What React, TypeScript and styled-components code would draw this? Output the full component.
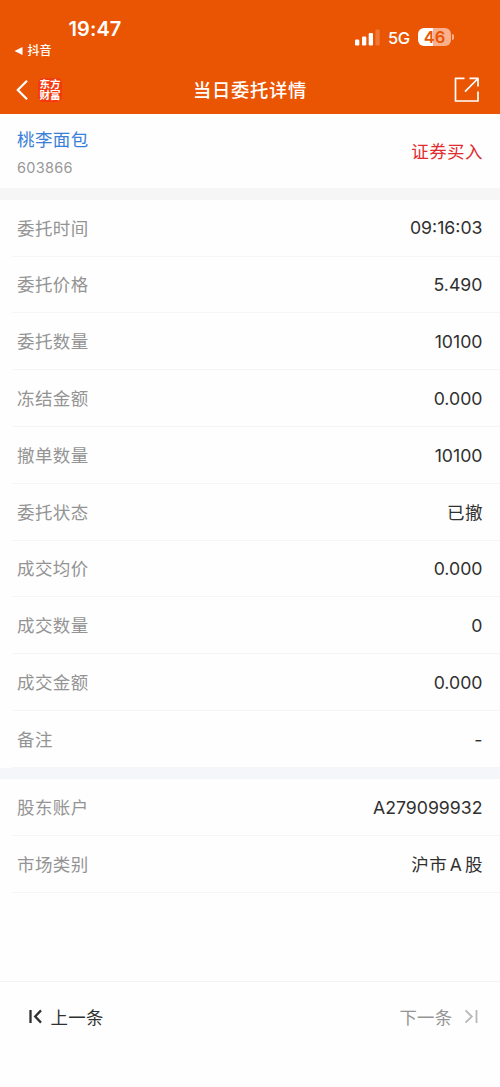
import React from "react";
import styled, { createGlobalStyle } from "styled-components";

const GlobalStyle = createGlobalStyle`
  *, *::before, *::after { box-sizing: border-box; }
  body {
    margin: 0;
    background: #fefefe;
    font-family: Inter, "Noto Sans CJK SC", sans-serif;
    color: #303030;
  }
`;

const Screen = styled.main`
  display: flex;
  flex-direction: column;
  width: 500px;
  height: 1087px;
  overflow: hidden;
`;

const Header = styled.header`
  display: flex;
  flex-direction: column;
  height: 114px;
  background: #ea5504;
  color: #fff;
`;

const StatusBar = styled.div`
  display: flex;
  justify-content: space-between;
  height: 64px;
  padding: 15px 46px 0 14px;
`;

const ClockArea = styled.div`
  display: flex;
  flex-direction: column;
`;

const Clock = styled.time`
  padding-left: 54.5px;
  font-size: 20px;
  font-weight: 600;
  line-height: 28px;
  letter-spacing: 0.1px;
`;

const ReturnLink = styled.div`
  display: flex;
  align-items: center;
  gap: 4.5px;
  height: 15px;
  font-size: 12px;
  font-weight: 500;
  line-height: 15px;
`;

const Signals = styled.div`
  display: flex;
  align-items: center;
  height: 44px;
`;

const Network = styled.span`
  width: 23px;
  margin: 1px 7px 0 8px;
  font-size: 16.5px;
  font-weight: 500;
  letter-spacing: -0.5px;
`;

const Battery = styled.div`
  display: flex;
  align-items: center;
  gap: 1px;
`;

const BatteryBody = styled.div`
  width: 33px;
  height: 18px;
  border-radius: 6px;
  background: linear-gradient(to right, #fff 46%, #f8b18c 46%);
  color: #ea5504;
  font-size: 16.5px;
  font-weight: 600;
  line-height: 18.5px;
  text-align: center;
`;

const BatteryTip = styled.div`
  width: 2px;
  height: 6px;
  border-radius: 0 2px 2px 0;
  background: #f8b18c;
`;

const TitleBar = styled.div`
  display: grid;
  grid-template-columns: 1fr auto 1fr;
  align-items: center;
  height: 50px;
  padding: 1px 20px 0 16px;
`;

const Title = styled.h1`
  margin: 0;
  padding: 1px 0 0 4px;
  font-size: 18.3px;
  font-weight: 500;
  line-height: 28px;
  letter-spacing: 0.7px;
`;

const BackArea = styled.div`
  display: flex;
  align-items: center;
  gap: 10px;
`;

const Brand = styled.div`
  display: flex;
  flex-direction: column;
  align-items: center;
  width: 24px;
  height: 24px;
  border-radius: 5px;
  background: #f5390d;
  font-family: "Noto Sans CJK SC", sans-serif;
  font-size: 10.6px;
  font-weight: 700;
  line-height: 11.5px;
  white-space: nowrap;
`;

const ShareIcon = styled.svg`
  justify-self: end;
`;

const Stock = styled.section`
  display: flex;
  align-items: center;
  justify-content: space-between;
  height: 74.2px;
  padding: 0 17.5px 0 17px;
`;

const StockId = styled.div`
  display: flex;
  flex-direction: column;
  padding-top: 5.4px;
`;

const StockName = styled.span`
  color: #3a80d8;
  font-size: 17.5px;
  line-height: 28px;
  letter-spacing: 0.4px;
`;

const StockCode = styled.span`
  color: #999;
  font-size: 14.5px;
  line-height: 28px;
  letter-spacing: 0.3px;
`;

const Side = styled.span`
  margin: -2px -0.4px 0 0;
  color: #e22b2f;
  font-size: 17.5px;
  letter-spacing: 0.4px;
`;

const Divider = styled.div<{ $color: string }>`
  height: 11.6px;
  background: ${(p) => p.$color};
`;

const Row = styled.div`
  display: flex;
  align-items: center;
  justify-content: space-between;
  height: 56.8px;
  margin-left: 12px;
  padding: 1px 17.5px 0 5px;
  border-bottom: 1px solid #f5f5f5;
`;

const List = styled.section`
  display: flex;
  flex-direction: column;
`;

const Label = styled.span`
  margin-top: -2px;
  color: #949494;
  font-size: 17.5px;
  letter-spacing: 0.4px;
`;

const Value = styled.span<{ $cjk?: boolean }>`
  margin: ${(p) => (p.$cjk ? "-2px -0.4px 0 0" : "-0.5px 0 0")};
  font-size: ${(p) => (p.$cjk ? "17.5px" : "17.7px")};
  letter-spacing: ${(p) => (p.$cjk ? "0.4px" : "0")};
  word-spacing: -2.6px;
`;

const Footer = styled.footer`
  display: flex;
  justify-content: space-between;
  height: 106px;
  margin-top: auto;
  padding: 19px 21px 0 28px;
  border-top: 1px solid #f3f3f3;
`;

const PageButton = styled.button<{ $muted?: boolean }>`
  display: flex;
  align-items: center;
  gap: ${(p) => (p.$muted ? "11.5px" : "7.5px")};
  height: 30px;
  padding: 0;
  border: 0;
  background: none;
  color: ${(p) => (p.$muted ? "#949494" : "#303030")};
  font-family: inherit;
  font-size: 17.4px;
  letter-spacing: 0.3px;
`;

type Entry = { label: string; value: string; cjk?: boolean };

const orderRows: Entry[] = [
  { label: "委托时间", value: "09:16:03" },
  { label: "委托价格", value: "5.490" },
  { label: "委托数量", value: "10100" },
  { label: "冻结金额", value: "0.000" },
  { label: "撤单数量", value: "10100" },
  { label: "委托状态", value: "已撤", cjk: true },
  { label: "成交均价", value: "0.000" },
  { label: "成交数量", value: "0" },
  { label: "成交金额", value: "0.000" },
  { label: "备注", value: "-" },
];

const accountRows: Entry[] = [
  { label: "股东账户", value: "A279099932" },
  { label: "市场类别", value: "沪市 A 股", cjk: true },
];

const Entries = ({ items }: { items: Entry[] }) => (
  <List>
    {items.map((item) => (
      <Row key={item.label}>
        <Label>{item.label}</Label>
        <Value $cjk={item.cjk}>{item.value}</Value>
      </Row>
    ))}
  </List>
);

export default function App() {
  return (
    <Screen>
      <GlobalStyle />
      <Header>
        <StatusBar>
          <ClockArea>
            <Clock>19:47</Clock>
            <ReturnLink>
              <svg width="9" height="8" viewBox="0 0 9 8">
                <path d="M0.5 4 8.5 0.1V7.9Z" fill="#fff" />
              </svg>
              抖音
            </ReturnLink>
          </ClockArea>
          <Signals>
            <svg width="25" height="17" viewBox="0 0 25 17" fill="#fff">
              <rect x="0" y="10.5" width="4.3" height="6" rx="1.3" />
              <rect x="7" y="7.5" width="4.3" height="9" rx="1.3" />
              <rect x="13.7" y="4" width="4.3" height="12.5" rx="1.3" />
              <rect x="20.4" y="0.5" width="4.3" height="16" rx="1.3" opacity="0.2" />
            </svg>
            <Network>5G</Network>
            <Battery>
              <BatteryBody>46</BatteryBody>
              <BatteryTip />
            </Battery>
          </Signals>
        </StatusBar>
        <TitleBar>
          <BackArea>
            <svg width="12" height="20" viewBox="0 0 12 20" fill="none" stroke="#fff" strokeWidth="2.2">
              <path d="M11 0.8 1.8 10 11 19.2" />
            </svg>
            <Brand>
              <span>东方</span>
              <span>财富</span>
            </Brand>
          </BackArea>
          <Title>当日委托详情</Title>
          <ShareIcon width="26" height="26" viewBox="0 0 26 26" fill="none" stroke="#fff" strokeWidth="1.7">
            <path d="M10.5 1.4H1.5V24H24V14.5M15.5 1.4H24V9.5M23.5 2 11 14.7" strokeLinejoin="round" />
          </ShareIcon>
        </TitleBar>
      </Header>
      <Stock>
        <StockId>
          <StockName>桃李面包</StockName>
          <StockCode>603866</StockCode>
        </StockId>
        <Side>证券买入</Side>
      </Stock>
      <Divider $color="#f6f6f6" />
      <Entries items={orderRows} />
      <Divider $color="#f4f6f9" />
      <Entries items={accountRows} />
      <Footer>
        <PageButton>
          <svg width="15" height="15" viewBox="0 0 15 15" fill="none" stroke="#303030" strokeWidth="2.3">
            <path d="M2.5 1V14M13 1.4 7.2 7.5 13 13.6" />
          </svg>
          上一条
        </PageButton>
        <PageButton $muted>
          下一条
          <svg width="15" height="15" viewBox="0 0 15 15" fill="none" stroke="#b8b8b8" strokeWidth="1.8">
            <path d="M12.5 1V14M1.5 1.4 7.8 7.5 1.5 13.6" />
          </svg>
        </PageButton>
      </Footer>
    </Screen>
  );
}
